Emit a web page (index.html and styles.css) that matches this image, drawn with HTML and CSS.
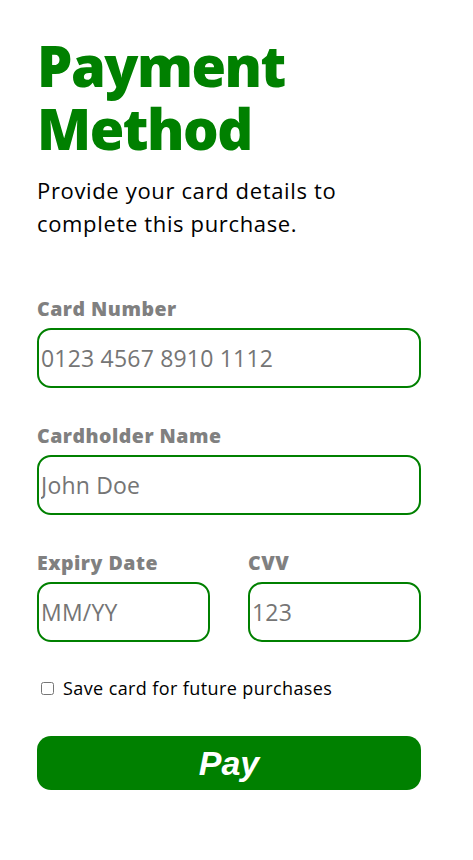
FILE: index.html
```html
<!DOCTYPE html>
<html lang="en">
<head>
<meta charset="utf-8">
<title>Payment Method</title>
<link rel="stylesheet" href="styles.css">
</head>
<body>
<main class="payment">
  <h1 class="title">Payment Method</h1>
  <p class="intro">Provide your card details to complete this purchase.</p>
  <form class="form">
    <div class="field">
      <label class="label" for="num">Card Number</label>
      <input class="input" id="num" type="text" placeholder="0123 4567 8910 1112">
    </div>
    <div class="field">
      <label class="label" for="name">Cardholder Name</label>
      <input class="input" id="name" type="text" placeholder="John Doe">
    </div>
    <div class="row">
      <div class="field">
        <label class="label" for="exp">Expiry Date</label>
        <input class="input" id="exp" type="text" placeholder="MM/YY">
      </div>
      <div class="field">
        <label class="label" for="cvv">CVV</label>
        <input class="input" id="cvv" type="text" placeholder="123">
      </div>
    </div>
    <label class="save"><input class="check" type="checkbox"> Save card for future purchases</label>
    <button class="pay" type="button">Pay</button>
  </form>
</main>
</body>
</html>
```
FILE: styles.css
```css
html, body {
  margin: 0;
  padding: 0;
  background: #ffffff;
}
body {
  font-family: "Open Sans", "Noto Sans", sans-serif;
  color: #000;
}
.payment {
  width: 384px;
  padding: 34px 0 40px 37px;
}
.title {
  margin: 0;
  font-size: 56px;
  line-height: 63px;
  font-weight: 800;
  color: #008000;
  letter-spacing: -1.5px;
}
.intro {
  margin: 14px 0 0;
  font-size: 22px;
  line-height: 33px;
  letter-spacing: 0.65px;
}
.form {
  display: flex;
  flex-direction: column;
  margin-top: 57px;
}
.field {
  display: flex;
  flex-direction: column;
  margin-bottom: 36px;
}
.label {
  font-size: 19.5px;
  line-height: 24px;
  font-weight: 800;
  color: #808080;
  letter-spacing: 0.5px;
  margin-bottom: 7px;
}
.input {
  box-sizing: border-box;
  height: 60px;
  border: 2px solid #008000;
  border-radius: 14px;
  padding: 0 2px;
  font-family: inherit;
  font-size: 23px;
  letter-spacing: 0.2px;
  outline: none;
}
.input::placeholder {
  color: #757575;
}
.row {
  display: grid;
  grid-template-columns: 173px 173px;
  column-gap: 38px;
}
.row .field {
  margin-bottom: 34px;
}
.save {
  display: flex;
  align-items: center;
  gap: 9px;
  font-size: 18px;
  line-height: 24px;
  letter-spacing: 0.4px;
  padding-left: 4px;
}
.check {
  margin: 0;
  width: 13px;
  height: 13px;
}
.pay {
  margin-top: 36px;
  height: 54px;
  border: none;
  border-radius: 14px;
  background: #008000;
  color: #fff;
  font-family: "Liberation Sans", Arial, sans-serif;
  font-size: 34px;
  font-weight: 700;
  font-style: italic;
  cursor: pointer;
}
```
